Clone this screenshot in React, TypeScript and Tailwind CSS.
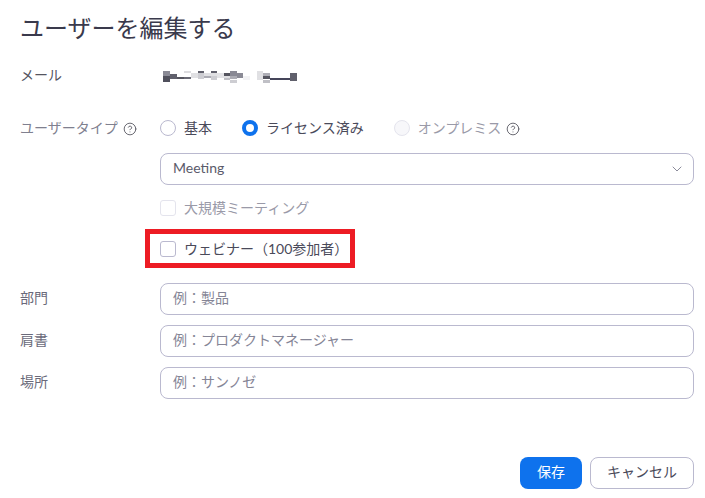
import { ChevronDown, CircleHelp } from "lucide-react";

const FONT = { fontFamily: '"Lato", "Noto Sans CJK JP", sans-serif' };

// pixelated email blocks: x, y, w, h, fill
const BLOCKS: [number, number, number, number, string][] = [
  [0, 0, 7, 5, "#8a8a95"], [0, 5, 7, 6, "#50505c"], [7, 3, 7, 5, "#60606c"], [14, 6, 7, 2, "#55555f"],
  [21, 0, 7, 2, "#dddde0"], [21, 6, 7, 2, "#6a6a75"], [28, 2, 7, 5, "#e0e0e3"], [35, 0, 6, 2, "#60606c"],
  [35, 2, 6, 6, "#cdcdd2"], [41, 2, 7, 3, "#e0e0e3"], [41, 5, 7, 2, "#adadb5"], [48, 0, 6, 2, "#60606c"],
  [48, 2, 6, 3, "#e0e0e3"], [48, 5, 6, 4, "#cdcdd2"], [54, 2, 7, 5, "#e3e3e6"], [61, 2, 6, 3, "#55555f"],
  [61, 5, 6, 2, "#e0e0e3"], [61, 7, 6, 2, "#c0c0c6"], [67, 0, 7, 5, "#8a8a95"], [67, 5, 7, 3, "#adadb5"],
  [67, 9, 7, 3, "#cdcdd2"], [74, 2, 6, 5, "#8a8a95"], [80, 5, 7, 4, "#f2f2f4"], [94, 0, 6, 9, "#e0e0e3"],
  [100, 2, 7, 3, "#adadb5"], [100, 5, 7, 3, "#55555f"], [100, 9, 7, 3, "#c0c0c6"], [107, 7, 20, 2, "#45455a"],
  [127, 2, 7, 8, "#60606c"],
];

function Radio({ label, checked, disabled }: { label: string; checked?: boolean; disabled?: boolean }) {
  return (
    <label className={`flex items-center gap-2 ${disabled ? "text-[#9a9aa8]" : "text-[#4a4a5a]"}`}>
      {checked ? (
        <span className="size-4 rounded-full border-[4px] border-[#0e72ed] bg-white" />
      ) : (
        <span className={`size-4 rounded-full border ${disabled ? "border-[#e4e4ed] bg-[#f7f7fa]" : "border-[#bab9cf] bg-white"}`} />
      )}
      <span>{label}</span>
    </label>
  );
}

function Field({ label, placeholder }: { label: string; placeholder: string }) {
  return (
    <div className="flex items-center">
      <div className="w-[140px] pb-[2px] text-[#6a6a7a]">{label}</div>
      <div className="flex h-8 w-[534px] items-center rounded-lg border border-[#bab9cf] px-3 pb-[2px] text-[#858596]">{placeholder}</div>
    </div>
  );
}

export default function App() {
  return (
    <div className="h-[498px] w-[705px] overflow-hidden bg-white pl-5 text-sm text-[#4a4a5a]" style={FONT}>
      <h1 className="pt-[10px] text-2xl leading-9 font-normal text-[#3a3a4c]">ユーザーを編集する</h1>

      <div className="mt-[19px] flex h-5 items-center">
        <div className="w-[143px] text-[#55555f]">メール</div>
        <svg width="134" height="12" className="mt-[4px] block">
          {BLOCKS.map(([x, y, w, h, fill], i) => (
            <rect key={i} x={x} y={y} width={w} height={h} fill={fill} />
          ))}
        </svg>
      </div>

      <div className="mt-[33px] flex h-5 items-center">
        <div className="flex w-[140px] items-center gap-[5px] text-[#80808f]">
          <span>ユーザータイプ</span>
          <CircleHelp size={14} strokeWidth={1.5} className="mt-[2px] text-[#55555f]" />
        </div>
        <div className="flex items-center gap-[30px]">
          <Radio label="基本" />
          <Radio checked label="ライセンス済み" />
          <div className="flex items-center gap-[5px]">
            <Radio disabled label="オンプレミス" />
            <CircleHelp size={14} strokeWidth={1.5} className="mt-[2px] text-[#55555f]" />
          </div>
        </div>
      </div>

      <div className="ml-[140px] mt-[15px] flex h-8 w-[534px] items-center justify-between rounded-lg border border-[#bab9cf] pl-3 pr-[8px] text-[#5a5a6a]">
        <span className="pb-[2px]">Meeting</span>
        <ChevronDown size={16} strokeWidth={1.25} className="text-[#747487]" />
      </div>

      <div className="ml-[140px] mt-[13px] flex h-5 items-center gap-2 text-[#9a9aa8]">
        <span className="size-4 rounded-[3px] border border-[#e4e4ed]" />
        <span>大規模ミーティング</span>
      </div>

      <div className="ml-[125px] mt-[11px] flex h-[39px] w-[210px] items-center gap-2 border-[5px] border-[#ed1c24] pl-[10px] text-[#4a4a5a]">
        <span className="size-4 rounded-[3px] border border-[#bab9cf]" />
        <span>ウェビナー（100参加者）</span>
      </div>

      <div className="mt-[15px] flex flex-col gap-[10px]">
        <Field label="部門" placeholder="例：製品" />
        <Field label="肩書" placeholder="例：プロダクトマネージャー" />
        <Field label="場所" placeholder="例：サンノゼ" />
      </div>

      <div className="mt-[58px] flex w-[674px] justify-end gap-2">
        <button className="h-8 w-[62px] rounded-lg bg-[#0e72ed] pb-[2px] text-white">保存</button>
        <button className="h-8 w-[104px] rounded-lg border border-[#bab9cf] bg-white pb-[2px] text-[#4a4a5a]">キャンセル</button>
      </div>
    </div>
  );
}
